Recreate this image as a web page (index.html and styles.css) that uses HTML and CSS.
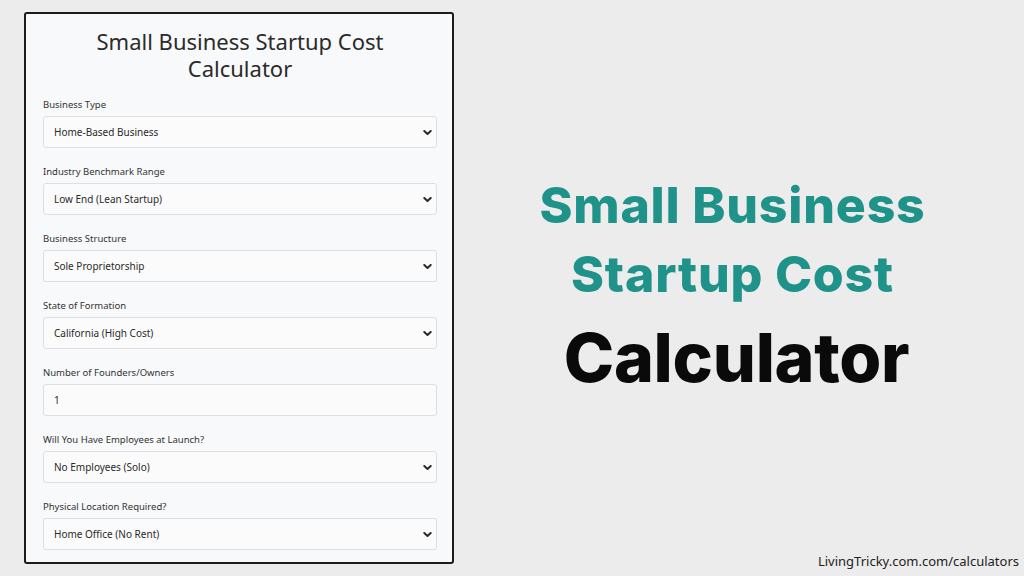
FILE: index.html
```html
<!DOCTYPE html>
<html lang="en">
<head>
<meta charset="utf-8">
<title>Small Business Startup Cost Calculator</title>
<link rel="stylesheet" href="styles.css">
</head>
<body>
<div class="page">
  <div class="card">
    <h1 class="card-title">Small Business Startup Cost Calculator</h1>
    <div class="field">
      <div class="label">Business Type</div>
      <div class="control"><span>Home-Based Business</span><svg class="chev" viewBox="0 0 9 5"><path d="M1.3 1 L4.5 4 L7.7 1"/></svg></div>
    </div>
    <div class="field">
      <div class="label">Industry Benchmark Range</div>
      <div class="control"><span>Low End (Lean Startup)</span><svg class="chev" viewBox="0 0 9 5"><path d="M1.3 1 L4.5 4 L7.7 1"/></svg></div>
    </div>
    <div class="field">
      <div class="label">Business Structure</div>
      <div class="control"><span>Sole Proprietorship</span><svg class="chev" viewBox="0 0 9 5"><path d="M1.3 1 L4.5 4 L7.7 1"/></svg></div>
    </div>
    <div class="field">
      <div class="label">State of Formation</div>
      <div class="control"><span>California (High Cost)</span><svg class="chev" viewBox="0 0 9 5"><path d="M1.3 1 L4.5 4 L7.7 1"/></svg></div>
    </div>
    <div class="field">
      <div class="label">Number of Founders/Owners</div>
      <div class="control"><span>1</span></div>
    </div>
    <div class="field">
      <div class="label">Will You Have Employees at Launch?</div>
      <div class="control"><span>No Employees (Solo)</span><svg class="chev" viewBox="0 0 9 5"><path d="M1.3 1 L4.5 4 L7.7 1"/></svg></div>
    </div>
    <div class="field last">
      <div class="label">Physical Location Required?</div>
      <div class="control"><span>Home Office (No Rent)</span><svg class="chev" viewBox="0 0 9 5"><path d="M1.3 1 L4.5 4 L7.7 1"/></svg></div>
    </div>
  </div>
  <div class="hero">
    <div class="hero-text">
      <div class="hero-teal">Small Business<br>Startup Cost</div>
      <div class="hero-black">Calculator</div>
    </div>
    <div class="footer">LivingTricky.com.com/calculators</div>
  </div>
</div>
</body>
</html>
```
FILE: styles.css
```css
* { box-sizing: border-box; }
html, body { margin: 0; padding: 0; }
body {
  width: 1024px;
  height: 576px;
  background: #ececec;
  overflow: hidden;
  font-family: "Noto Sans", "Open Sans", sans-serif;
}
.page {
  display: flex;
  height: 576px;
}
.card {
  margin: 12px 0 0 24px;
  width: 430px;
  height: 552px;
  background: #f8f9fa;
  border: 2px solid #1c1c1c;
  border-radius: 3px;
  padding: 14px 15px 0 17px;
}
.card-title {
  margin: 0 0 17px 0;
  text-align: center;
  font-weight: 400;
  font-size: 22px;
  line-height: 27px;
  color: #2b2b2b;
  padding: 0 40px;
}
.field { margin-bottom: 18px; }
.field.last { margin-bottom: 0; }
.label {
  font-size: 9.5px;
  line-height: 12px;
  color: #333;
  margin-bottom: 5px;
}
.control {
  height: 32px;
  background: #fbfbfc;
  border: 1px solid #dcdfe3;
  border-radius: 3px;
  display: flex;
  align-items: center;
  justify-content: space-between;
  padding: 0 4px 0 10px;
  font-size: 10px;
  color: #2a2a2a;
}
.chev {
  width: 9px;
  height: 5px;
  fill: none;
  stroke: #2a2a2a;
  stroke-width: 2;
  stroke-linecap: round;
  stroke-linejoin: round;
}
.hero {
  flex: 1;
  display: flex;
  flex-direction: column;
  align-items: center;
  padding-right: 13px;
}
.hero-text {
  margin-top: 171px;
  text-align: center;
}
.hero-teal {
  color: #1f928a;
  font-family: "Inter", sans-serif;
  font-weight: 800;
  font-size: 50px;
  line-height: 69px;
  letter-spacing: 0.8px;
}
.hero-black {
  color: #0a0a0a;
  font-family: "Inter", sans-serif;
  font-weight: 800;
  font-size: 68px;
  line-height: 96px;
  letter-spacing: -0.3px;
  padding-left: 8px;
}
.footer {
  margin-top: auto;
  align-self: flex-end;
  margin-right: -8px;
  margin-bottom: 6px;
  font-size: 13px;
  color: #222;
}
```
